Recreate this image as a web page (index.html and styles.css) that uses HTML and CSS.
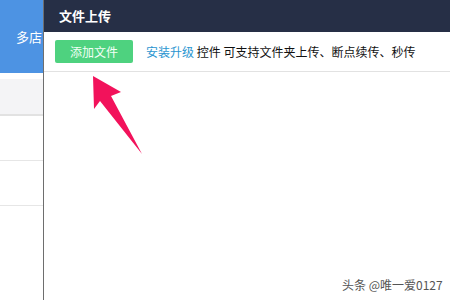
FILE: index.html
```html
<!DOCTYPE html>
<html lang="zh">
<head>
<meta charset="utf-8">
<link rel="stylesheet" href="styles.css">
</head>
<body>
<div class="page">
  <aside class="side">
    <div class="side-head"><span class="side-title">多店</span></div>
    <div class="side-tab"></div>
    <div class="side-row"></div>
    <div class="side-row"></div>
    <div class="side-rest"></div>
  </aside>
  <section class="modal">
    <header class="modal-head">文件上传</header>
    <div class="toolbar">
      <button class="add-btn">添加文件</button>
      <p class="hint"><span class="link">安装升级</span> 控件 可支持文件夹上传、断点续传、秒传</p>
    </div>
    <div class="modal-body"></div>
  </section>
</div>
<svg class="arrow" width="450" height="300" viewBox="0 0 450 300">
  <polygon points="93,76 121,92 111,96 142,154 100,101 94,109" fill="#f2125b"/>
</svg>
<div class="watermark">头条 @唯一爱0127</div>
</body>
</html>
```
FILE: styles.css
```css
html, body {
  margin: 0;
  padding: 0;
  width: 450px;
  height: 300px;
  overflow: hidden;
  background: #fff;
  font-family: "Noto Sans CJK SC", "Liberation Sans", sans-serif;
}
.page {
  display: flex;
  width: 450px;
  height: 300px;
}
.side {
  width: 43px;
  flex: none;
  overflow: hidden;
  border-right: 1px solid #6e6e6e;
  display: flex;
  flex-direction: column;
}
.side-head {
  height: 73px;
  background: #4d93e3;
  display: flex;
  align-items: center;
  padding-left: 16px;
  white-space: nowrap;
}
.side-title {
  color: #fff;
  font-size: 13px;
  line-height: 16px;
}
.side-tab {
  margin-top: 6px;
  height: 35px;
  background: #f4f4f6;
  border-bottom: 2px solid #e2e2e2;
}
.side-row {
  height: 44px;
  border-bottom: 1px solid #e6e6e6;
}
.side-row:first-of-type { height: 43px; }
.side-rest { flex: 1; }
.modal {
  flex: 1;
  display: flex;
  flex-direction: column;
}
.modal-head {
  height: 32px;
  background: #262f46;
  color: #fff;
  font-size: 13px;
  font-weight: bold;
  line-height: 32px;
  padding-left: 15px;
}
.toolbar {
  border-bottom: 1px solid #e2e2e2;
  display: flex;
  align-items: flex-start;
  padding: 8px 0 0 11px;
  box-sizing: border-box;
  height: 40px;
}
.add-btn {
  width: 78px;
  height: 23px;
  border: none;
  border-radius: 2px;
  background: #4ed27f;
  color: #f2fff6;
  font-family: inherit;
  font-size: 12px;
  padding: 0;
  line-height: 23px;
}
.hint {
  margin: 0 0 0 13px;
  font-size: 12px;
  line-height: 23px;
  color: #111;
  white-space: nowrap;
}
.link { color: #2a95d0; }
.modal-body { flex: 1; }
.arrow {
  position: absolute;
  left: 0;
  top: 0;
}
.watermark {
  position: absolute;
  left: 342px;
  top: 277px;
  font-size: 12px;
  line-height: 16px;
  color: #555;
  white-space: nowrap;
}
```
